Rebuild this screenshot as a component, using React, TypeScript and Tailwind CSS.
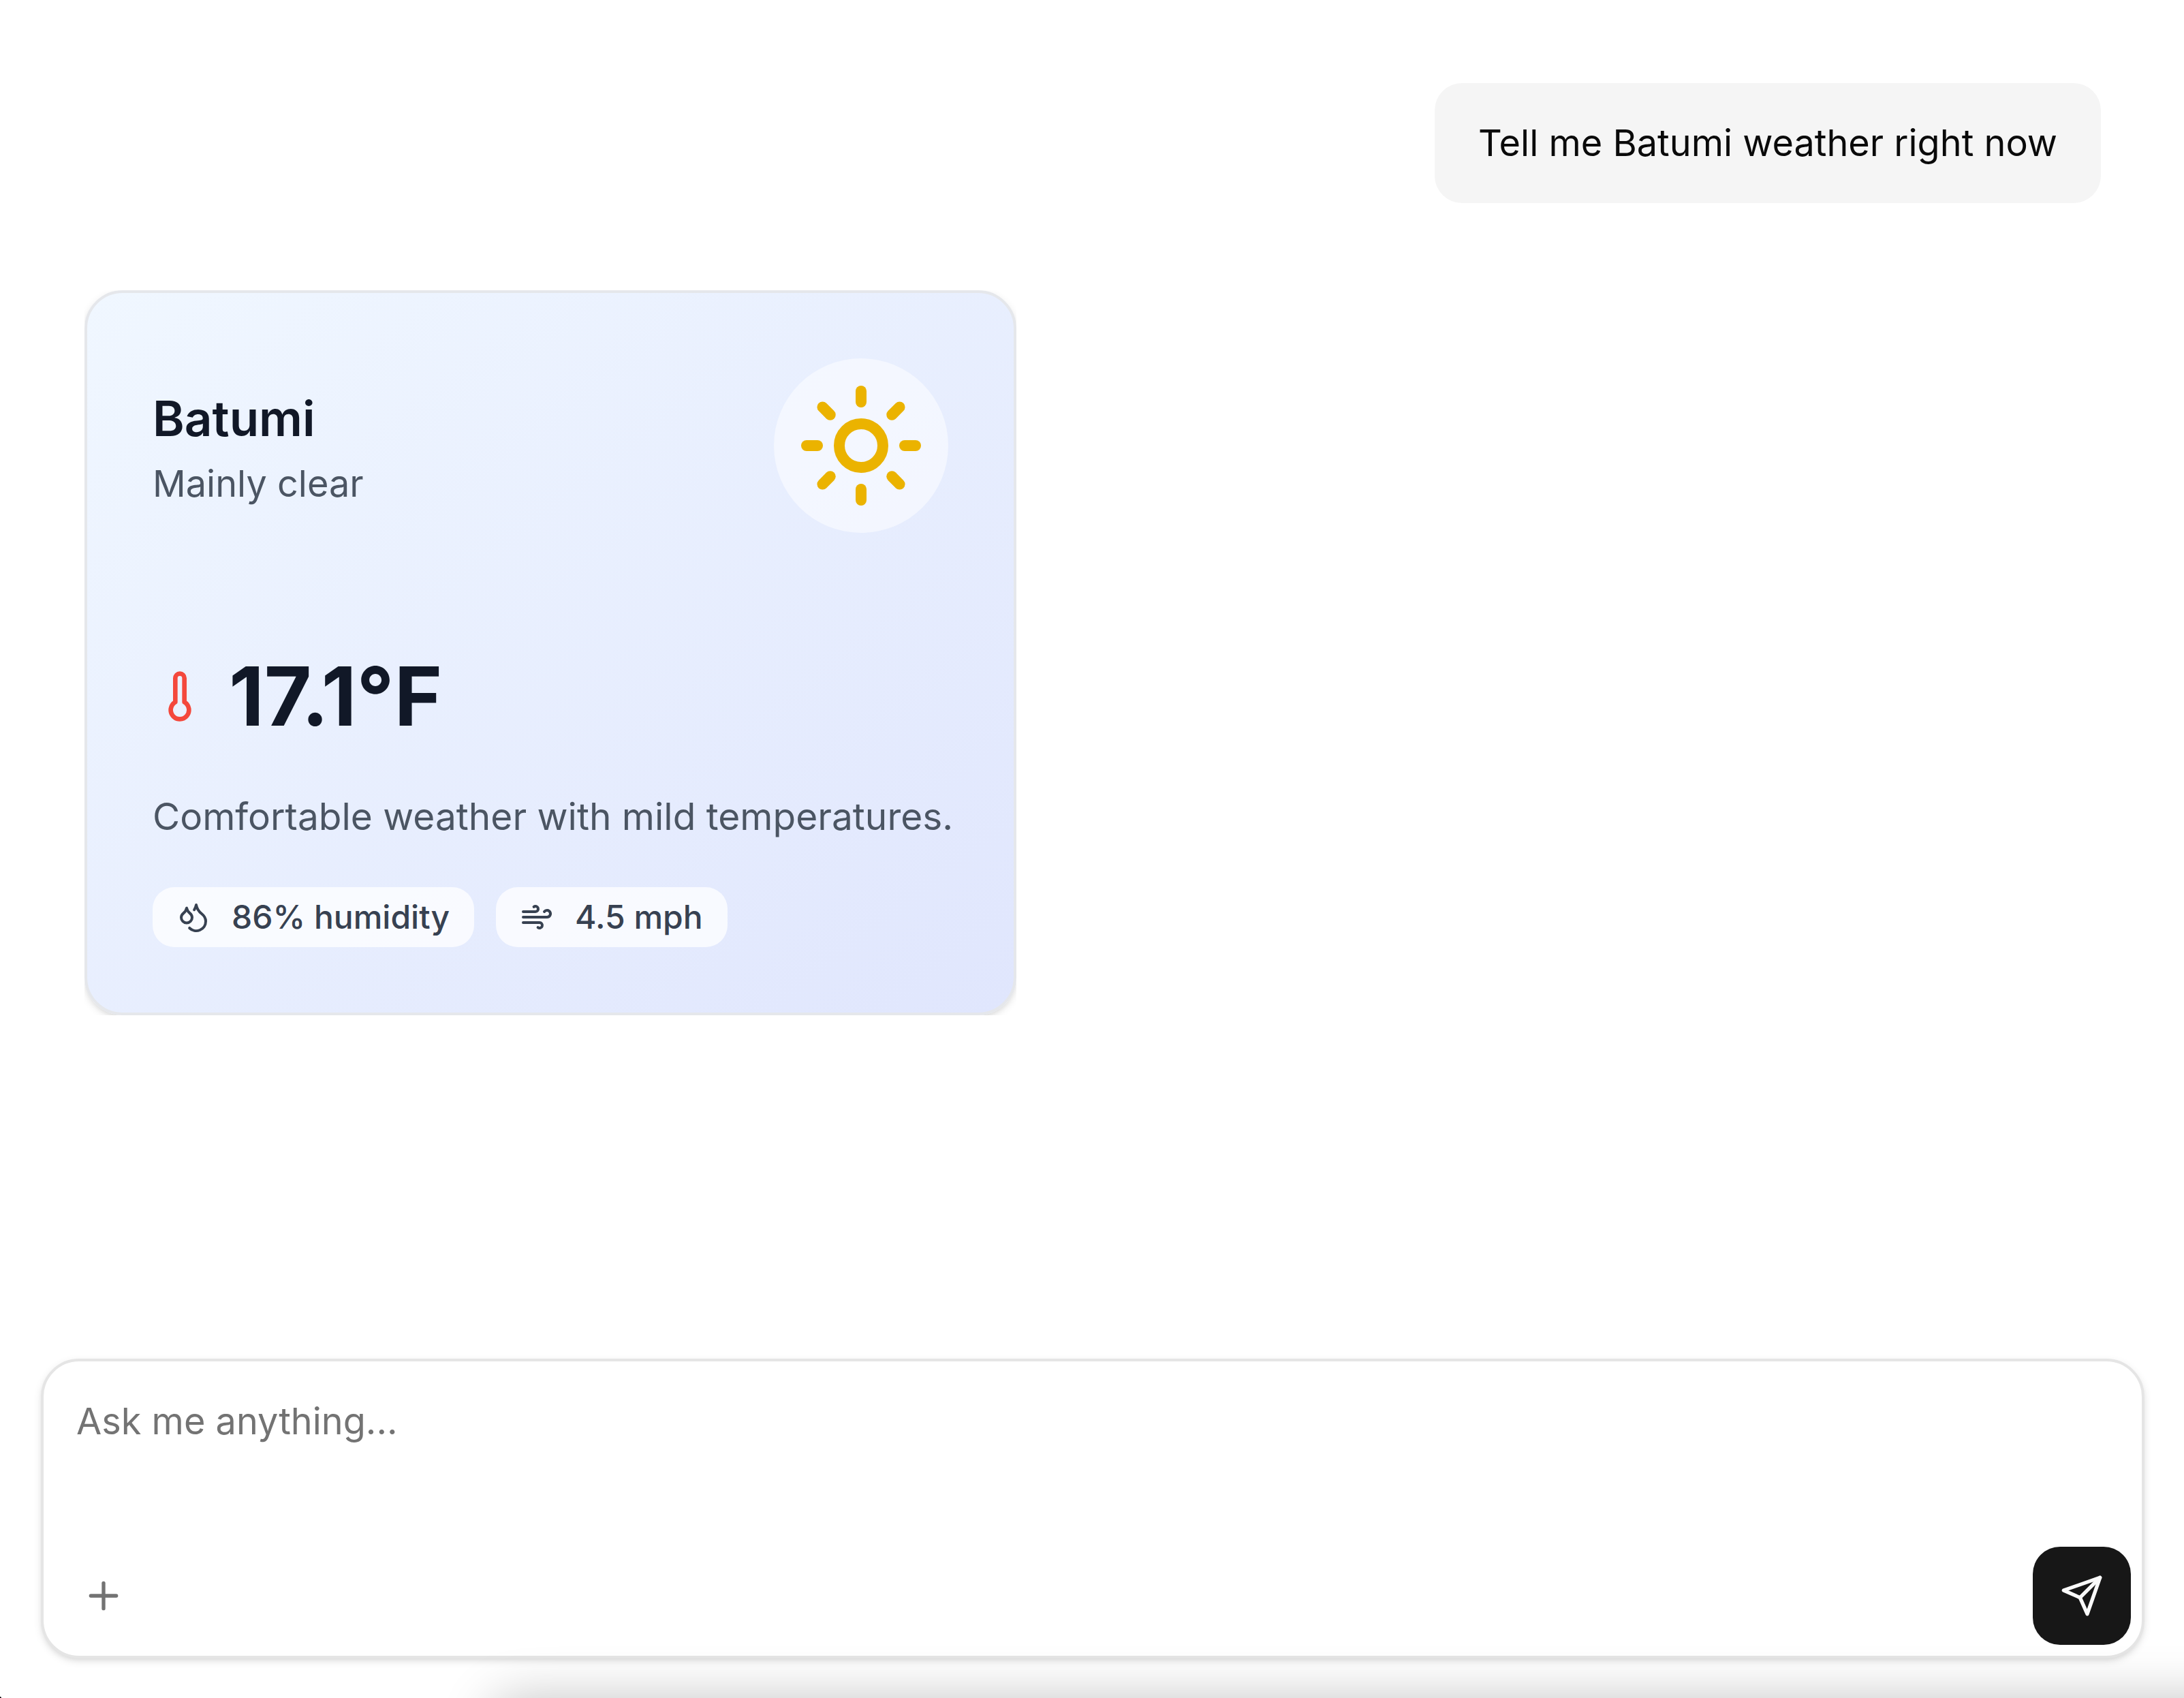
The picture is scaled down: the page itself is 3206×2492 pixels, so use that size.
import type { ReactNode } from "react";
import { Droplets, Plus, Sun, Thermometer, Wind } from "lucide-react";

function SendIcon() {
  return (
    <svg
      viewBox="0 0 24 24"
      className="size-16"
      fill="none"
      stroke="currentColor"
      strokeWidth="2"
      strokeLinecap="round"
      strokeLinejoin="round"
      aria-hidden="true"
    >
      <path d="m22 2-7 20-4-9-9-4Z" />
      <path d="M22 2 11 13" />
    </svg>
  );
}

function Badge({ icon, label }: { icon: ReactNode; label: string }) {
  return (
    <li className="flex items-center gap-8 rounded-[32px] bg-white/75 px-9 py-3 text-[48px] leading-[64px] font-medium text-[#374151]">
      {icon}
      {label}
    </li>
  );
}

function WeatherCard() {
  return (
    <div className="self-start overflow-hidden">
      <article className="w-342 rounded-[56px] border-4 border-gray-200 bg-linear-to-br from-[#f0f7ff] to-[#e0e6fd] p-24 shadow-[0_4px_12px_0_rgba(0,0,0,0.1),0_4px_8px_-4px_rgba(0,0,0,0.1)]">
        <header className="flex items-center justify-between">
          <div>
            <h2 className="text-[71px] leading-[112px] font-semibold text-[#111827]">Batumi</h2>
            <p className="text-[54px] leading-[80px] text-[#4b5563]">Mainly clear</p>
          </div>
          <div className="rounded-full bg-white/50 p-8">
            <Sun className="size-48 text-[#ebb300]" aria-hidden="true" />
          </div>
        </header>
        <div className="mt-42 flex items-center gap-8">
          <Thermometer className="size-20 text-[#f4483c]" aria-hidden="true" />
          <span className="text-[120px] leading-[144px] font-bold text-[#111827]">17.1°F</span>
        </div>
        <p className="mt-16 text-[55px] leading-[80px] whitespace-nowrap text-[#4b5563]">
          Comfortable weather with mild temperatures.
        </p>
        <ul className="mt-16 flex gap-8">
          <Badge icon={<Droplets className="size-12" aria-hidden="true" />} label="86% humidity" />
          <Badge icon={<Wind className="size-12" aria-hidden="true" />} label="4.5 mph" />
        </ul>
      </article>
    </div>
  );
}

function Composer() {
  return (
    <form
      className="flex flex-col rounded-[56px] border-4 border-[#e5e5e5] bg-white shadow-[0_4px_12px_0_rgba(0,0,0,0.1),0_4px_8px_-4px_rgba(0,0,0,0.1)]"
      onSubmit={(event) => event.preventDefault()}
    >
      <textarea
        aria-label="Message"
        placeholder="Ask me anything..."
        className="block h-64 resize-none px-12 pt-12 text-[54px] leading-[80px] text-[#0a0a0a] outline-none placeholder:text-[#737373]"
      />
      <div className="flex items-center justify-between p-4">
        <button
          type="button"
          aria-label="Add attachment"
          className="flex size-36 items-center justify-center rounded-[40px] text-[#737373]"
        >
          <Plus className="size-16" aria-hidden="true" />
        </button>
        <button
          type="submit"
          aria-label="Send"
          className="flex size-36 items-center justify-center rounded-[40px] bg-[#171717] text-[#fafafa]"
        >
          <SendIcon />
        </button>
      </div>
    </form>
  );
}

export default function App() {
  return (
    <div className="relative flex min-h-screen flex-col overflow-hidden bg-white pr-[58px] pb-[58px] pl-[60px] font-['Inter',sans-serif]">
      <main className="flex flex-1 flex-col gap-32 px-16 pt-[122px]">
        <p className="self-end rounded-[40px] bg-[#f5f5f5] px-16 py-12 text-[54px] leading-[80px] text-[#0a0a0a]">
          Tell me Batumi weather right now
        </p>
        <WeatherCard />
      </main>
      <Composer />
      <div className="pointer-events-none absolute top-full -right-50 left-[720px] h-100 rounded-[40px] shadow-[0_0_76px_rgba(0,0,0,0.23)]" />
      <div className="pointer-events-none absolute bottom-0 left-0 size-0.5 rounded-tr-full bg-black" />
    </div>
  );
}
